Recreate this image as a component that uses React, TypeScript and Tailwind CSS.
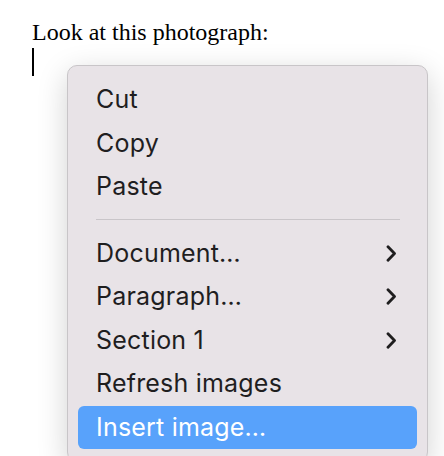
import React from 'react';

type Item = { label: string; submenu?: boolean; active?: boolean };

const top: Item[] = [{ label: 'Cut' }, { label: 'Copy' }, { label: 'Paste' }];
const bottom: Item[] = [
  { label: 'Document…', submenu: true },
  { label: 'Paragraph…', submenu: true },
  { label: 'Section 1', submenu: true },
  { label: 'Refresh images' },
  { label: 'Insert image…', active: true },
];

function Chevron() {
  return (
    <svg width="11" height="17" viewBox="0 0 11 17" fill="none">
      <path d="M2 1.8 L8.5 8.5 L2 15.2" stroke="currentColor" strokeWidth="2.8" strokeLinecap="round" strokeLinejoin="round" />
    </svg>
  );
}

function MenuRow({ item }: { item: Item }) {
  return (
    <div
      className={
        item.active
          ? 'flex h-[43.5px] items-center justify-between rounded-[6px] bg-[#58a2fb] pl-[18px] pr-[20px] text-white'
          : 'flex h-[43.5px] items-center justify-between rounded-[6px] pl-[18px] pr-[20px] text-[#1f1e1f]'
      }
    >
      <span>{item.label}</span>
      {item.submenu && <Chevron />}
    </div>
  );
}

export default function App() {
  return (
    <div className="h-[456px] w-[444px] overflow-hidden bg-white">
      <div className="pl-[32px] pt-[18px] text-[24px] leading-[28px] text-black" style={{ fontFamily: '"Liberation Serif", serif' }}>
        Look at this photograph:
      </div>
      <div className="ml-[32px] mt-[2px] h-[28px] w-[2px] bg-black" />
      <div
        className="-mt-[11px] ml-[67px] w-[361px] rounded-[10px] border border-[#c8c5c8] bg-[#e8e3e7] px-[10px] pb-[12px] pt-[12px] text-[25px] tracking-[0.2px] shadow-[0_8px_30px_rgba(0,0,0,0.18)]"
        style={{ fontFamily: 'Inter, "Noto Sans", sans-serif' }}
      >
        {top.map((it) => (
          <MenuRow key={it.label} item={it} />
        ))}
        <div className="h-[23px] pl-[18px] pr-[17px] pt-[10px]">
          <div className="h-[1.5px] bg-[#c9c5c9]" />
        </div>
        {bottom.map((it) => (
          <MenuRow key={it.label} item={it} />
        ))}
      </div>
    </div>
  );
}
